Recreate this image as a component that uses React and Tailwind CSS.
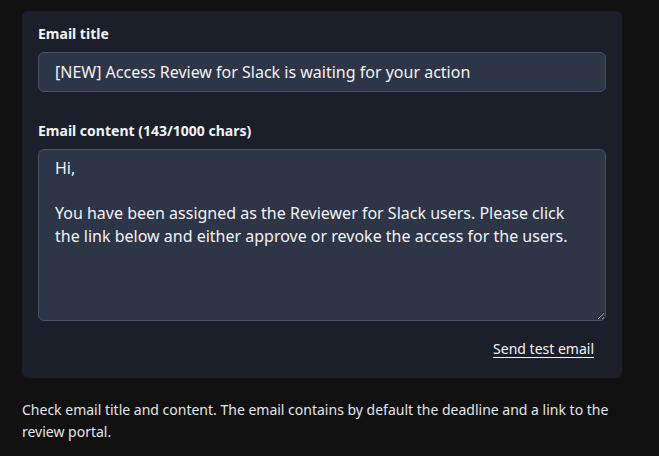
export default function App() {
  return (
    <div
      className="min-h-screen bg-[#111111] text-[#e8eaed] px-[22px] pt-[11px]"
      style={{ fontFamily: '"Noto Sans", sans-serif' }}
    >
      <div className="w-[600px] rounded-md bg-[#1b1f2a] px-4 pt-[13px] pb-[19px]">
        <label className="block text-[14px] font-bold leading-[20px] text-[#f1f3f5]">Email title</label>
        <input
          className="mt-[8px] block w-full h-[40px] rounded-md border border-[#4a5163] bg-[#2d3546] px-4 text-[16px] text-[#f1f3f5] outline-none"
          defaultValue="[NEW] Access Review for Slack is waiting for your action"
        />
        <label className="block mt-[29px] text-[14px] font-bold leading-[20px] text-[#f1f3f5]">
          Email content (143/1000 chars)
        </label>
        <textarea
          className="mt-[8px] block w-full h-[172px] rounded-md border border-[#4a5163] bg-[#2d3546] px-4 pt-[7px] text-[16px] leading-[22.5px] text-[#f1f3f5] outline-none resize-y"
          defaultValue={
            'Hi,\n\nYou have been assigned as the Reviewer for Slack users. Please click the link below and either approve or revoke the access for the users.'
          }
        />
        <div className="flex justify-end mt-[18px] pr-3">
          <button className="text-[14px] leading-[20px] underline underline-offset-[3px] text-[#f1f3f5]">
            Send test email
          </button>
        </div>
      </div>
      <p className="mt-[21px] w-[600px] text-[14px] leading-[22px] text-[#e3e5e8]">
        Check email title and content. The email contains by default the deadline and a link to the review portal.
      </p>
    </div>
  );
}
